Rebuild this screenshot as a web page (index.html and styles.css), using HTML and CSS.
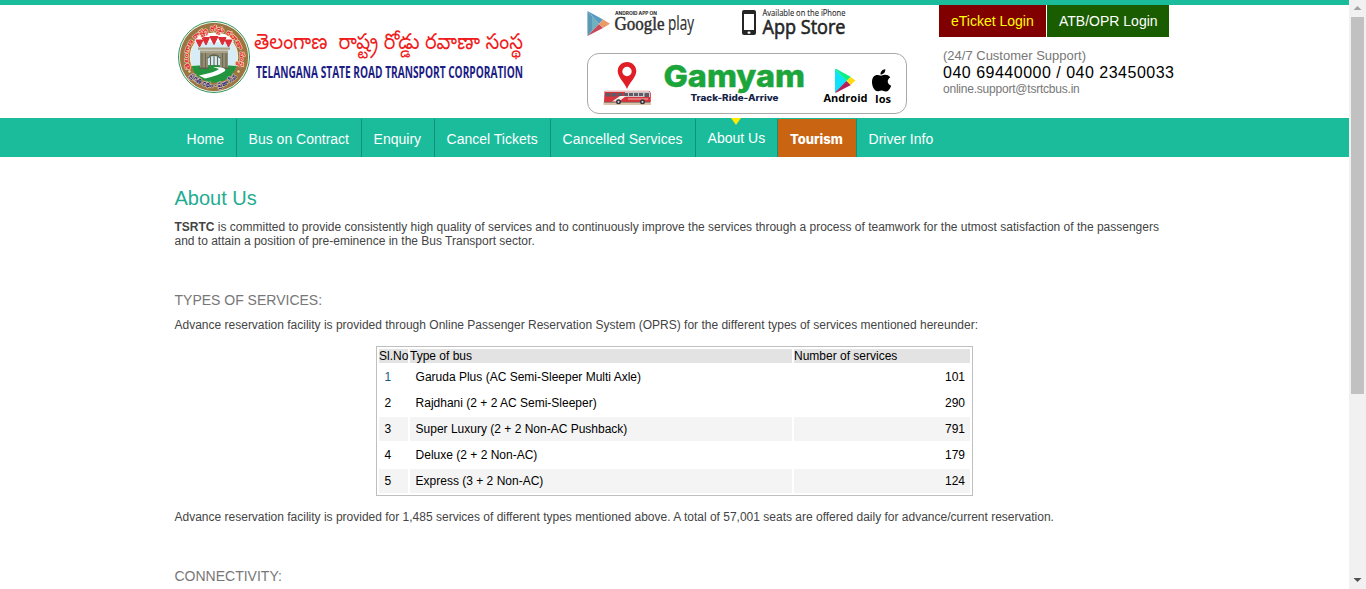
FILE: index.html
```html
<!DOCTYPE html>
<html lang="en">
<head>
<meta charset="utf-8">
<title>TSRTC - About Us</title>
<link rel="stylesheet" href="styles.css">
</head>
<body>
<div class="window">
<div class="page">
  <header class="header">
    <svg class="logo" width="360" height="84" viewBox="170 15 360 84">
      <defs>
        <path id="arc-top" d="M191 68.500 A25.700 25.700 0 1 1 237 68.500"/>
        <path id="arc-bottom" d="M185.500 69 A31.200 31.200 0 0 0 242.500 69"/>
      </defs>
      <circle cx="214" cy="57" r="35.5" fill="#fff" stroke="#2d9257" stroke-width="1"/>
      <circle cx="214" cy="57" r="34.2" fill="#9b7541"/>
      <circle cx="214" cy="57" r="23.500" fill="#d6edf8" stroke="#f4ead8" stroke-width="1.5"/>
      <path d="M191.500 66 Q214 64 236.500 66 A23.500 23.500 0 0 1 191.500 66Z" fill="#23953f"/>
      <path d="M197 36 Q214 29 231 36 L234 42 H194Z" fill="#fff"/>
      <path d="M196 40h7l-3.500 7z M202 37.500h7.500l-3.500 7.500z M210 36.500h8l-4 8z M218.500 37.500h7.500l-3.500 7.500z M225 40h7l-3.500 7z" fill="#dc2c35" stroke="#dc2c35" stroke-width="1" stroke-linejoin="round"/>
      <path d="M198 47.500h32v2.200h-32z M200 50.500h28v2.500h-28z" fill="#aaa186"/>
      <path d="M200 53h8v15h-8z M220 53h8v15h-8z M208 53h12v3h-12z" fill="#958d74"/>
      <path d="M202 53v15M205.500 53v15M222.500 53v15M226 53v15M210.500 57v9M214 56v10M217.500 57v9" stroke="#696955" stroke-width="1.1"/>
      <path d="M199 68.300h10M219 68.300h10M207.500 58q6.500-6 13 0" stroke="#5c6250" stroke-width="1.500" fill="none"/>
      <path d="M213 67 Q227 67 225 71 Q218 76 205 78.500 L199 75.500 Q216 72 219 69Z" fill="#fff"/>
      <text class="seal-text seal-red"><textPath href="#arc-top" textLength="102" lengthAdjust="spacingAndGlyphs">తెలంగాణ రాష్ట్ర రోడ్డు రవాణా సంస్థ</textPath></text>
      <text class="seal-text seal-blue"><textPath href="#arc-bottom" startOffset="8" textLength="54" lengthAdjust="spacingAndGlyphs">ప్రగతి రథం - ప్రజా సేవ</textPath></text>
      <circle cx="189.500" cy="71.500" r="1.300" fill="#ecd3a0"/><circle cx="238.500" cy="71.500" r="1.300" fill="#ecd3a0"/>
      <text class="telugu" x="254" y="49" textLength="269" lengthAdjust="spacingAndGlyphs" xml:space="preserve">తెలంగాణ  రాష్ట్ర రోడ్డు రవాణా సంస్థ</text>
      <text class="corp" x="256" y="78" textLength="267" lengthAdjust="spacingAndGlyphs">TELANGANA STATE ROAD TRANSPORT CORPORATION</text>
    </svg>

    <div class="apps">
      <svg class="stores" width="320" height="36" viewBox="587 5 320 36">
        <path d="M587.500 11V36L599 24Z" fill="#6fb1bd"/>
        <path d="M587.500 11L603 19.500L599 24Z" fill="#589bc3"/>
        <path d="M587.500 36L603 28L599 24Z" fill="#c94958"/>
        <path d="M587.500 11L592 17V30L587.500 36Z" fill="#427fae" opacity=".45"/>
        <path d="M603 19.500L610 23.800L603 28L599 24Z" fill="#e89a68"/>
        <text class="android-on" x="615" y="14.500" textLength="42" lengthAdjust="spacingAndGlyphs">ANDROID APP ON</text>
        <text class="google" x="614.500" y="30" textLength="50" lengthAdjust="spacingAndGlyphs">Google</text>
        <text class="play" x="668" y="30" textLength="26" lengthAdjust="spacingAndGlyphs">play</text>
        <rect x="742" y="10" width="14" height="25" rx="2" fill="#252525"/>
        <rect x="744" y="14" width="10" height="16" fill="#fff"/>
        <rect x="747.500" y="31.500" width="3" height="2.300" rx="1" fill="#fff"/>
        <text class="iphone" x="762.500" y="15.500" textLength="83" lengthAdjust="spacingAndGlyphs">Available on the iPhone</text>
        <text class="appstore" x="762.500" y="33.500" textLength="83" lengthAdjust="spacingAndGlyphs">App Store</text>
      </svg>
      <div class="gamyam">
        <svg width="318" height="59" viewBox="588 54 318 59">
          <path d="M627 62c-5.400 0-9.300 4-9.300 9 0 6.300 6.800 11.500 9.300 18 2.500-6.500 9.300-11.700 9.300-18 0-5-3.900-9-9.300-9zm0 4.800a4.700 4.700 0 1 0 0 9.400a4.700 4.700 0 1 0 0-9.400z" fill-rule="evenodd" fill="#e11e26"/>
          <rect x="603.500" y="102" width="47.500" height="3" fill="#dac3a9"/>
          <path d="M604.500 91h45l1.300 2v9H604z" fill="#d8343b"/>
          <path d="M605 90.500h44v1.500h-44z" fill="#e9c3c0"/>
          <path d="M625 92h25v5h-25z" fill="#c9c5c8"/>
          <path d="M605.500 93h5.500v3.500h-5.500zM612 93h5v3.500h-5zM618 93h4.500v3h-4.500zM624 93h4v3h-4zM629 93h4v3h-4zM634 93h4v3h-4zM639 93h4v3h-4zM644.500 93h4.500v4h-4.500z" fill="#5f5a66"/>
          <path d="M612 101.500l8-5.500h6l-7 5.500z" fill="#f3eeee"/><path d="M628 98.500h20v1h-20z" fill="#f3b9b5"/>
          <path d="M604 102.300h46" stroke="#70655e" stroke-width=".8"/>
          <circle cx="618.500" cy="101.800" r="2.500" fill="#34343a"/><circle cx="618.500" cy="101.800" r="1.100" fill="#ccc"/>
          <circle cx="642.500" cy="101.800" r="2.500" fill="#34343a"/><circle cx="642.500" cy="101.800" r="1.100" fill="#ccc"/>
          <text class="gamyam-name" x="663.500" y="86.500" textLength="141.500" lengthAdjust="spacingAndGlyphs">Gamyam</text>
          <text class="gamyam-tag" x="690.500" y="101" textLength="88" lengthAdjust="spacingAndGlyphs">Track-Ride-Arrive</text>
          <path d="M835 69v24l12-12z" fill="#10e1fb"/>
          <path d="M835 69h1.500L851 77l-4.500 4z" fill="#0cef83"/>
          <path d="M835 92.500l11.500-11.500 4.500 4-14.500 7.500z" fill="#b81d5b"/>
          <path d="M850.500 77l5 3.500-5 4.500-4-4.200z" fill="#ffdc16"/>
          <path d="M880.500 74.500c-.3-2.600 1.700-5 4.800-5.300.3 2.800-1.900 5.200-4.800 5.300z"/>
          <path d="M872 82c0-6 4-8.500 9-6.200 4-1.800 7-1.200 9.300 1.400-3.700 2.700-3.300 6.500.9 8.600-1.900 5.100-4.300 7-8.300 5-1.500-.6-2.200-.4-3.800.3C875 92.500 872 87 872 82z"/>
          <text class="os-name" x="823.500" y="101.500" textLength="44" lengthAdjust="spacingAndGlyphs">Android</text>
          <text class="os-name" x="875" y="103" textLength="16" lengthAdjust="spacingAndGlyphs">Ios</text>
        </svg>
      </div>
    </div>

    <div class="contact">
      <div class="logins"><a class="login eticket">eTicket Login</a><a class="login atb">ATB/OPR Login</a></div>
      <div class="support">(24/7 Customer Support)</div>
      <div class="phones">040 69440000 / 040 23450033</div>
      <div class="email">online.support@tsrtcbus.in</div>
    </div>
  </header>

  <nav class="nav">
    <a class="item home">Home</a>
    <a class="item contract">Bus on Contract</a>
    <a class="item enquiry">Enquiry</a>
    <a class="item cancel">Cancel Tickets</a>
    <a class="item cancelled">Cancelled Services</a>
    <a class="item about">About Us</a>
    <a class="item tourism">Tourism</a>
    <a class="item driver">Driver Info</a>
  </nav>

  <main class="content">
    <h1>About Us</h1>
    <p class="intro"><b>TSRTC</b> is committed to provide consistently high quality of services and to continuously improve the services through a process of teamwork for the utmost satisfaction of the passengers<br>and to attain a position of pre-eminence in the Bus Transport sector.</p>
    <h2>TYPES OF SERVICES:</h2>
    <p class="lead">Advance reservation facility is provided through Online Passenger Reservation System (OPRS) for the different types of services mentioned hereunder:</p>
    <table class="services">
      <tr class="head"><td class="no">Sl.No</td><td class="type">Type of bus</td><td class="count">Number of services</td></tr>
      <tr><td class="first">1</td><td>Garuda Plus (AC Semi-Sleeper Multi Axle)</td><td>101</td></tr>
      <tr><td>2</td><td>Rajdhani (2 + 2 AC Semi-Sleeper)</td><td>290</td></tr>
      <tr class="shade"><td>3</td><td>Super Luxury (2 + 2 Non-AC Pushback)</td><td>791</td></tr>
      <tr><td>4</td><td>Deluxe (2 + 2 Non-AC)</td><td>179</td></tr>
      <tr class="shade"><td>5</td><td>Express (3 + 2 Non-AC)</td><td>124</td></tr>
    </table>
    <p class="total">Advance reservation facility is provided for 1,485 services of different types mentioned above. A total of 57,001 seats are offered daily for advance/current reservation.</p>
    <h2 class="connectivity">CONNECTIVITY:</h2>
  </main>
</div>
<div class="scrollbar">
  <svg width="17" height="17" viewBox="0 0 17 17"><path d="M4.500 10L8.500 6L12.500 10Z" fill="#a3a3a3"/></svg>
  <div class="thumb"></div>
  <svg width="17" height="17" viewBox="0 0 17 17"><path d="M4.500 6L8.500 10L12.500 6Z" fill="#505050"/></svg>
</div>
</div>
</body>
</html>
```
FILE: styles.css
```css
* { box-sizing: border-box; }
body { margin: 0; overflow: hidden; background: #fff; font: 12px/14px "Liberation Sans", Arial, sans-serif; color: #444; }
svg { display: block; flex: none; overflow: visible; }
.window { display: flex; width: 1366px; height: 589px; overflow: hidden; }
.page { flex: 1; min-width: 0; height: 589px; overflow: hidden; }
.header { height: 118px; border-top: 5px solid #1abc9c; display: flex; padding-left: 170px; }
.logo { margin-top: 10px; }
.telugu { font: 22px "Noto Sans Telugu", "Liberation Sans", sans-serif; fill: #f01d20; }
.corp { font: 700 15.5px "Open Sans", "Noto Sans", sans-serif; fill: #1c1c85; }
.seal-text { font: 700 7px "Noto Sans Telugu", "Liberation Sans", sans-serif; }
.seal-red { fill: #e32225; stroke: #f3d9bb; stroke-width: 1.2; paint-order: stroke; }
.seal-blue { fill: #292675; stroke: #e5cfae; stroke-width: 1.2; paint-order: stroke; }
.apps { width: 320px; margin-left: 57px; }
.android-on { font: 700 4.6px Inter, sans-serif; fill: #252525; }
.google { font: 19.5px "Liberation Serif", serif; fill: #303030; stroke: #303030; stroke-width: .5; }
.play { font: 20px "Open Sans", sans-serif; fill: #303030; stroke: #303030; stroke-width: .2; }
.iphone { font: 8.4px "Open Sans", sans-serif; fill: #252525; stroke: #252525; stroke-width: .1; }
.appstore { font: 19.5px "Open Sans", sans-serif; fill: #252525; stroke: #252525; stroke-width: .6; }
.gamyam { width: 320px; height: 61px; margin-top: 12px; border: 1px solid #a9a9a9; border-radius: 12px; }
.gamyam-name { font: 800 30px Inter, sans-serif; fill: #1ba53b; stroke: #1ba53b; stroke-width: .4; }
.gamyam-tag { font: 800 9px Inter, sans-serif; fill: #152348; }
.os-name { font: 700 11px "Open Sans", sans-serif; fill: #000; }
.contact { width: 240px; margin-left: 32px; }
.logins { display: flex; gap: 1px; height: 32px; font-size: 14px; line-height: 32px; }
.login { padding-left: 12px; white-space: nowrap; }
.eticket { width: 107px; background: #800000; color: #ff0; }
.atb { width: 122px; background: #1a5c00; color: #fff; }
.support { margin: 11px 0 0 4px; font-size: 13px; line-height: 15px; color: #777; }
.phones { margin-left: 4px; font-size: 16px; line-height: 19px; letter-spacing: .5px; color: #000; white-space: nowrap; }
.email { margin-left: 4px; line-height: 14px; letter-spacing: -.22px; color: #777; }
.nav { display: flex; height: 39px; padding-left: 175px; background: #1abc9c; color: #fff; font-size: 14px; }
.item { height: 38px; margin-top: 1px; padding: 12px 0 0 11.6px; line-height: 16px; border-right: 1px solid #149078; white-space: nowrap; }
.home { width: 62px; }
.contract { width: 125px; }
.enquiry { width: 73px; }
.cancel { width: 116px; }
.cancelled { width: 145px; }
.about { position: relative; width: 82px; padding-top: 11px; }
.about::before { content: ""; position: absolute; left: 35px; top: -1px; border: solid transparent; border-width: 7px 5px 0; border-top-color: #ffea00; }
.tourism { width: 79px; padding-left: 12px; background: #c96512; font-family: Inter, "Liberation Sans", sans-serif; font-size: 13px; font-weight: 800; }
.driver { border-right: 0; }
.content { padding: 29px 0 0 174.5px; }
h1 { margin: 0; font-size: 20px; line-height: 24px; font-weight: 400; color: #1fac91; }
p { margin: 0; white-space: nowrap; }
.intro { margin-top: 10px; }
h2 { margin: 43px 0 0; font-size: 14px; line-height: 18px; font-weight: 400; color: #777; }
.lead { margin-top: 9px; }
.services { width: 597px; margin: 14px 0 0 201.5px; border: 1px solid #bfbfbf; border-spacing: 2px; table-layout: fixed; color: #000; }
.services td { height: 24px; padding: 0 5px 0 5.6px; vertical-align: middle; white-space: nowrap; }
.services tr td:last-child { text-align: right; }
.services .head td { height: 14px; padding: 0; background: #e3e3e3; }
.services .head td:last-child { text-align: left; }
.services .first { color: #135b82; }
.no { width: 29px; }
.type { width: 382px; }
.shade td { background: #f4f4f4; }
.total { margin-top: 14px; }
h2.connectivity { margin-top: 43px; }
.scrollbar { display: flex; flex-direction: column; width: 17px; background: #f1f1f1; }
.thumb { width: 13px; height: 377px; margin: 0 2px 178px; background: #c1c1c1; }
```
